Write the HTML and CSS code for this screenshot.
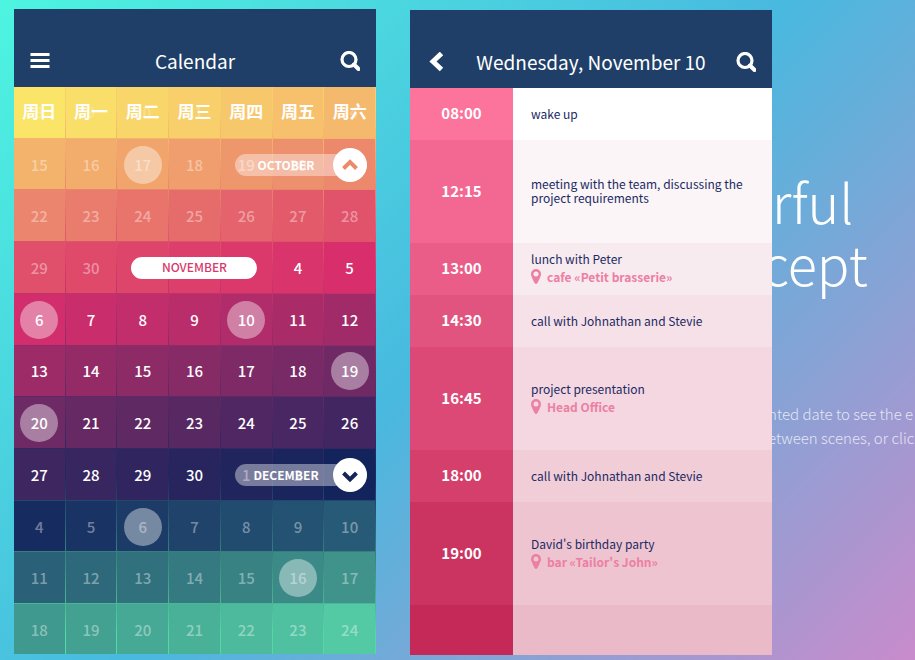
FILE: index.html
```html
<!DOCTYPE html>
<html lang="zh-CN">
<head>
<meta charset="utf-8">
<title>Calendar</title>
<link rel="stylesheet" href="styles.css">
</head>
<body>
<main class="stage">
  <section class="panel calendar">
    <header class="bar">
      <button class="icon-button" aria-label="Menu"><svg width="20" height="20" viewBox="0 0 20 20"><path fill="#fff" d="M.5 2h19v3h-19zM.5 8h19v3h-19zM.5 14h19v3h-19z"/></svg></button>
      <h2 class="title">Calendar</h2>
      <button class="icon-button" aria-label="Search"><svg width="20" height="20" viewBox="0 0 20 20"><circle cx="9" cy="8.500" r="7" fill="none" stroke="#fff" stroke-width="3.200"/><path d="M14 13.500L18.500 18" stroke="#fff" stroke-width="4" stroke-linecap="round"/></svg></button>
    </header>
    <table class="month">
      <tr class="week w1"><th>周日<span class="ghost">8</span></th><th>周一<span class="ghost">9</span></th><th>周二<span class="ghost">10</span></th><th>周三<span class="ghost">11</span></th><th>周四<span class="ghost">12</span></th><th>周五<span class="ghost">13</span></th><th>周六<span class="ghost">14</span></th></tr>
      <tr class="week w2 other"><td>15</td><td>16</td><td><span class="event">17</span></td><td>18</td><td>19</td><td>20</td><td><button class="jump">OCTOBER<span class="knob"><svg width="18" height="18" viewBox="0 0 18 18"><path d="M2.500 12.500L9 6L15.500 12.500" fill="none" stroke="#ec8a6c" stroke-width="4"/></svg></span></button></td></tr>
      <tr class="week w3 other"><td>22</td><td>23</td><td>24</td><td>25</td><td>26</td><td>27</td><td>28</td></tr>
      <tr class="week w4"><td class="other">29</td><td class="other">30</td><td><span class="current">NOVEMBER</span></td><td></td><td></td><td>4</td><td>5</td></tr>
      <tr class="week w5"><td><span class="event">6</span></td><td>7</td><td>8</td><td>9</td><td><span class="event">10</span></td><td>11</td><td>12</td></tr>
      <tr class="week w6"><td>13</td><td>14</td><td>15</td><td>16</td><td>17</td><td>18</td><td><span class="event">19</span></td></tr>
      <tr class="week w7"><td><span class="event">20</span></td><td>21</td><td>22</td><td>23</td><td>24</td><td>25</td><td>26</td></tr>
      <tr class="week w8"><td>27</td><td>28</td><td>29</td><td>30</td><td class="other">1</td><td class="other">2</td><td><button class="jump">DECEMBER<span class="knob"><svg width="18" height="18" viewBox="0 0 18 18"><path d="M2.500 7L9 13.500L15.500 7" fill="none" stroke="#13245a" stroke-width="4"/></svg></span></button></td></tr>
      <tr class="week w9 other"><td>4</td><td>5</td><td><span class="event">6</span></td><td>7</td><td>8</td><td>9</td><td>10</td></tr>
      <tr class="week w10 other"><td>11</td><td>12</td><td>13</td><td>14</td><td>15</td><td><span class="event">16</span></td><td>17</td></tr>
      <tr class="week w11 other"><td>18</td><td>19</td><td>20</td><td>21</td><td>22</td><td>23</td><td>24</td></tr>
    </table>
  </section>

  <section class="panel agenda">
    <header class="bar">
      <button class="icon-button" aria-label="Back"><svg width="20" height="20" viewBox="0 0 20 20"><path d="M15.500 1.500L7 9.500L15.500 17.500" fill="none" stroke="#fff" stroke-width="5"/></svg></button>
      <h2 class="title">Wednesday, November 10</h2>
      <button class="icon-button" aria-label="Search"><svg width="20" height="20" viewBox="0 0 20 20"><circle cx="9" cy="8.500" r="7" fill="none" stroke="#fff" stroke-width="3.200"/><path d="M14 13.500L18.500 18" stroke="#fff" stroke-width="4" stroke-linecap="round"/></svg></button>
    </header>
    <ol class="slots">
      <li class="slot s1"><time>08:00</time><div class="detail"><p>wake up</p></div></li>
      <li class="slot s2 long"><time>12:15</time><div class="detail"><p>meeting with the team, discussing the project requirements</p></div></li>
      <li class="slot s3"><time>13:00</time><div class="detail"><p>lunch with Peter</p><p class="place"><svg width="10" height="16" viewBox="0 0 10 16"><path fill="#ec7fa4" fill-rule="evenodd" d="M5 0A5 5 0 0 1 10 5C10 7 9 8.500 7 13Q5 17 3 13C1 8.500 0 7 0 5A5 5 0 0 1 5 0ZM5 2.500A2.500 2.500 0 1 0 5 7.500A2.500 2.500 0 1 0 5 2.500Z"/></svg>cafe «Petit brasserie»</p></div></li>
      <li class="slot s4"><time>14:30</time><div class="detail"><p>call with Johnathan and Stevie</p></div></li>
      <li class="slot s5 long"><time>16:45</time><div class="detail"><p>project presentation</p><p class="place"><svg width="10" height="16" viewBox="0 0 10 16"><path fill="#ec7fa4" fill-rule="evenodd" d="M5 0A5 5 0 0 1 10 5C10 7 9 8.500 7 13Q5 17 3 13C1 8.500 0 7 0 5A5 5 0 0 1 5 0ZM5 2.500A2.500 2.500 0 1 0 5 7.500A2.500 2.500 0 1 0 5 2.500Z"/></svg>Head Office</p></div></li>
      <li class="slot s6"><time>18:00</time><div class="detail"><p>call with Johnathan and Stevie</p></div></li>
      <li class="slot s7 long"><time>19:00</time><div class="detail"><p>David's birthday party</p><p class="place"><svg width="10" height="16" viewBox="0 0 10 16"><path fill="#ec7fa4" fill-rule="evenodd" d="M5 0A5 5 0 0 1 10 5C10 7 9 8.500 7 13Q5 17 3 13C1 8.500 0 7 0 5A5 5 0 0 1 5 0ZM5 2.500A2.500 2.500 0 1 0 5 7.500A2.500 2.500 0 1 0 5 2.500Z"/></svg>bar «Tailor's John»</p></div></li>
      <li class="slot s8"><time></time><div class="detail"></div></li>
    </ol>
  </section>

  <section class="intro">
    <h1><span class="line first">rful</span><span class="line">cept</span></h1>
    <p>nted date to see the e</p>
    <p>etween scenes, or clic</p>
  </section>
</main>
</body>
</html>
```

FILE: styles.css
```css
* { box-sizing: border-box; }

body {
  margin: 0;
  min-height: 100vh;
  overflow: hidden;
  font-family: "Noto Sans CJK SC", sans-serif;
  color: #fff;
  background: linear-gradient(135deg, #4df5e0, #48b9df 50%, #c98bcb);
}

h1, h2, p, ol { margin: 0; padding: 0; }
button { border: 0; padding: 0; background: none; color: inherit; font: inherit; }
svg { display: block; flex: none; }

.stage {
  display: grid;
  grid-template-columns: minmax(0, 362px) minmax(0, 362px) minmax(0, 1fr);
  column-gap: 34px;
  align-items: start;
  padding: 9px 0 0 14px;
}

.panel {
  position: relative;
  z-index: 1;
  aspect-ratio: 362 / 645;
  overflow: hidden;
  display: flex;
  flex-direction: column;
}
.agenda { margin-top: 1px; }

.bar {
  flex: none;
  height: 78px;
  padding: 26px 16px 0;
  display: flex;
  align-items: center;
  justify-content: space-between;
  background: #1f3f69;
}
.title { font-size: 19px; line-height: 26px; font-weight: 400; padding-bottom: 1px; }
.icon-button { width: 20px; height: 20px; }

.month {
  display: block;
  background: linear-gradient(
    #f7cf6b 4%, #ef9d6b 14%, #e4696b 23%, #d63a6c 32%, #a82c69 41%, #752a66 50%,
    #4a2763 59%, #1d2860 68%, #286576 77%, #3f9988 86%, #56d8a6 96%
  );
}
.month tbody { display: block; }
.week { display: grid; grid-template-columns: repeat(7, minmax(0, 1fr)); }
.week > * {
  position: relative;
  aspect-ratio: 1;
  padding: 1px 0 0;
  display: flex;
  align-items: center;
  justify-content: center;
  font-size: 15px;
  line-height: 20px;
  font-weight: 500;
  border: solid transparent;
  border-width: 0 1px 1px 0;
  background: color-mix(in srgb, var(--to) var(--t), var(--from)) padding-box;
}
.week th { padding: 0 0 2px; font-size: 17px; font-weight: 700; }
.week > :nth-child(1) { --t: 0%; }
.week > :nth-child(2) { --t: 17%; }
.week > :nth-child(3) { --t: 33%; }
.week > :nth-child(4) { --t: 50%; }
.week > :nth-child(5) { --t: 67%; }
.week > :nth-child(6) { --t: 83%; }
.week > :nth-child(7) { --t: 100%; }

.w1 { --from: #fae568; --to: #f5b96d; }
.w2 { --from: #f3b36c; --to: #ec896d; }
.w3 { --from: #eb856d; --to: #e1526b; }
.w4 { --from: #e0506b; --to: #d82e6c; }
.w5 { --from: #d22e6d; --to: #a02b68; }
.w6 { --from: #9c2b67; --to: #6f2a65; }
.w7 { --from: #6e2a65; --to: #412661; }
.w8 { --from: #3e2660; --to: #13245c; }
.w9 { --from: #162c60; --to: #275a76; }
.w10 { --from: #2a6078; --to: #3f938a; }
.w11 { --from: #40998e; --to: #53c9a4; }

.other, .ghost { color: rgba(255, 255, 255, .4); }
.ghost {
  position: absolute;
  inset: 0;
  display: grid;
  place-items: center;
  font-size: 15px;
  font-weight: 500;
  color: rgba(255, 255, 255, .25);
}

.event {
  width: 38px;
  height: 38px;
  border-radius: 50%;
  display: grid;
  place-items: center;
  background: rgba(255, 255, 255, .4);
}

.current, .jump {
  position: absolute;
  z-index: 1;
  height: 22px;
  border-radius: 11px;
  font-size: 12px;
  line-height: 20px;
  text-align: center;
}
.current { left: 14px; width: 126px; background: #fff; color: #d93a6b; }
.jump {
  right: 8px;
  width: 132px;
  padding-right: 30px;
  background: rgba(255, 255, 255, .4);
  color: #fff;
  font-weight: 700;
}
.knob {
  position: absolute;
  right: 0;
  top: -6px;
  width: 34px;
  height: 34px;
  border-radius: 50%;
  display: grid;
  place-items: center;
  background: #fff;
}

.slots { flex: 1; display: flex; flex-direction: column; list-style: none; }
.slot { flex: none; height: 52px; display: flex; background: var(--tint); }
.slot.long { height: 103px; }
.slot.s8 { flex: 1; }
.slot time {
  flex: none;
  width: 103px;
  padding-bottom: 2px;
  display: grid;
  place-items: center;
  background: var(--shade);
  font-size: 15px;
  line-height: 20px;
  font-weight: 700;
}
.detail {
  flex: 1;
  padding: 0 18px 1px;
  display: flex;
  flex-direction: column;
  justify-content: center;
  gap: 3px;
  font-size: 12px;
  line-height: 14px;
  color: #1c2a63;
}
.place { display: flex; align-items: center; gap: 6px; line-height: 16px; font-weight: 700; color: #ec7fa4; }

.s1 { --shade: #fc739b; --tint: #fff; }
.s2 { --shade: #f26892; --tint: #fbf5f7; }
.s3 { --shade: #ea5d89; --tint: #f8ebef; }
.s4 { --shade: #e25480; --tint: #f6e1e8; }
.s5 { --shade: #dc4976; --tint: #f4d7e0; }
.s6 { --shade: #d43f6c; --tint: #f1cdd8; }
.s7 { --shade: #cb3461; --tint: #eec4d0; }
.s8 { --shade: #c42958; --tint: #eabac8; }

.intro { margin-left: -44px; padding-top: 161px; white-space: nowrap; }
.intro h1 { margin-bottom: 108px; font-size: 54px; line-height: 62px; font-weight: 300; }
.line { display: block; }
.first { padding-left: 10px; }
.intro p { padding-left: 6px; font-size: 15px; line-height: 24px; font-weight: 300; color: rgba(255, 255, 255, .75); }
```
